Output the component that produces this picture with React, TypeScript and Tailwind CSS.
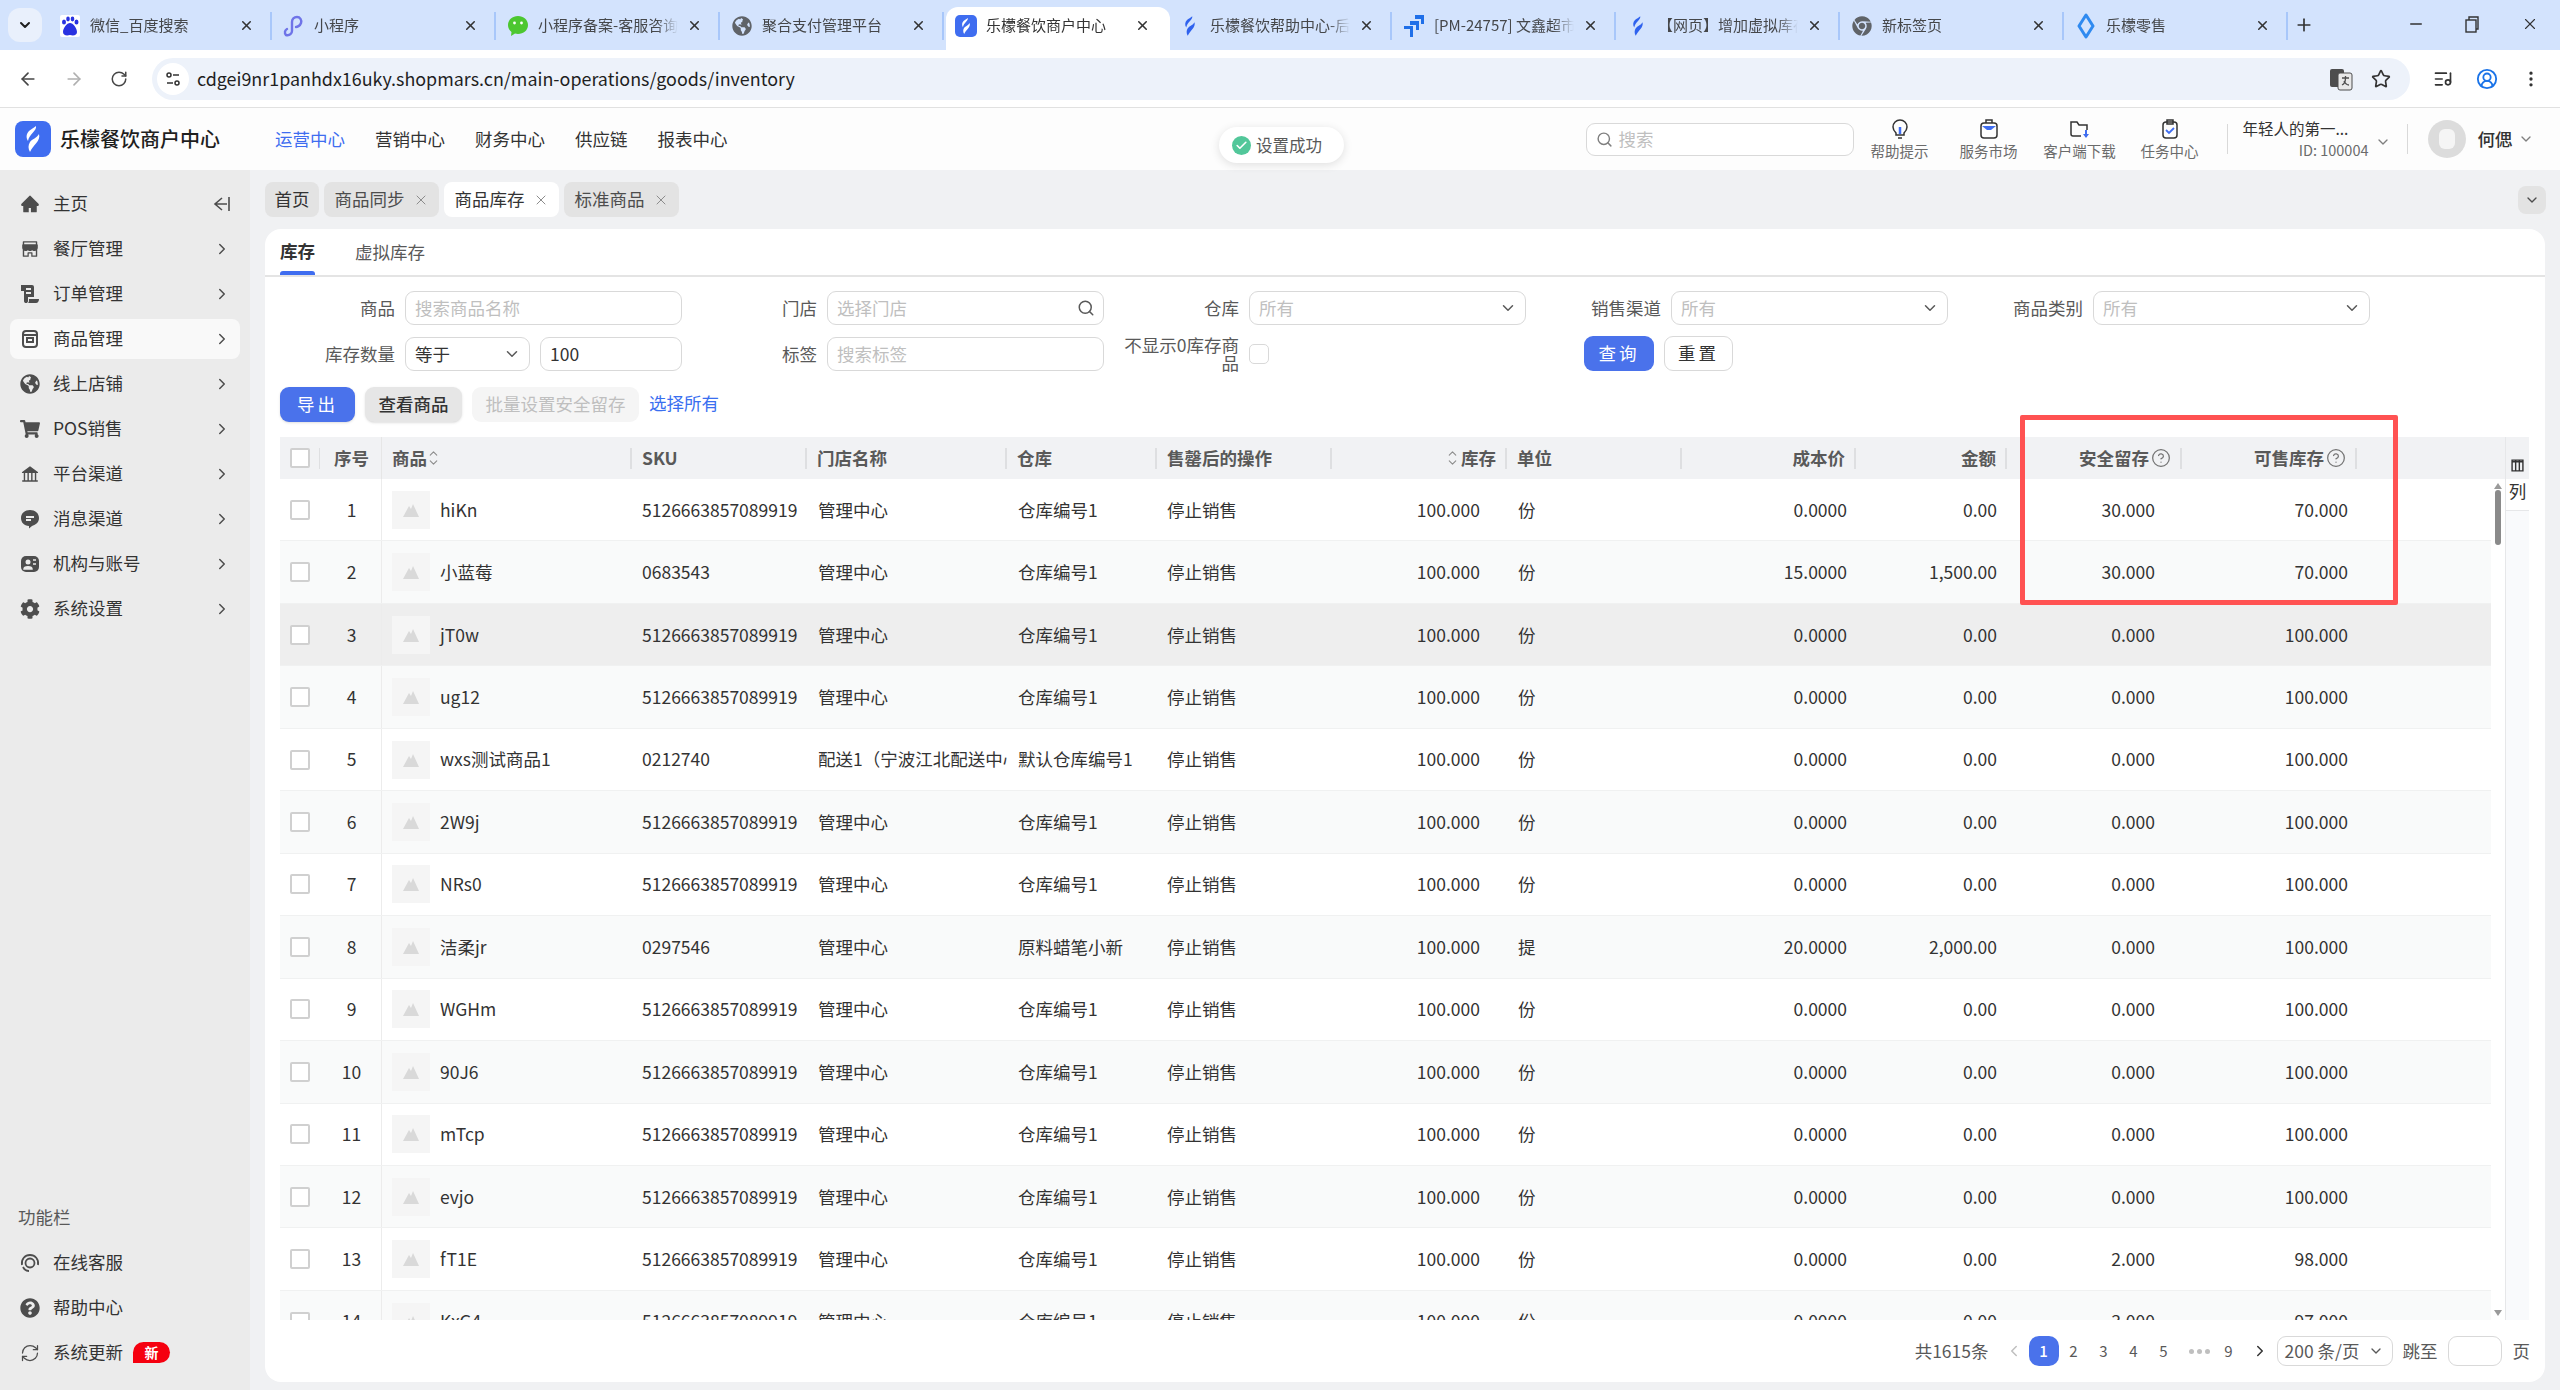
import type { ReactNode } from "react";
import {
  ArrowLeft,
  ArrowRight,
  Check,
  ChevronDown,
  ChevronLeft,
  ChevronRight,
  ChevronUp,
  CircleHelp,
  CircleUserRound,
  EllipsisVertical,
  ListMusic,
  Minus,
  Plus,
  RefreshCw,
  RotateCw,
  Search,
  Star,
  X,
} from "lucide-react";
import { AiFillBank, AiFillHome, AiFillShop } from "react-icons/ai";
import { FaChrome, FaCog, FaGlobeAmericas, FaQuestionCircle, FaShoppingCart } from "react-icons/fa";

const flame = "M21 5C22 10 14 13 13 20 11 17 11 13 14 10 16 8 19 7 21 5ZM24 13C26 20 18 24 15 31 13 28 13 24 15 21 17 18 22 17 24 13Z";

function Logo({ className }: { className: string }) {
  return (
    <svg viewBox="0 0 36 36" className={className}>
      <rect width="36" height="36" rx="8" fill="#3f6df0" />
      <path d={flame} fill="#fff" />
    </svg>
  );
}

function Flame() {
  return (
    <svg viewBox="8 2 20 32" className="h-[24px] w-[18px]">
      <path d={flame} fill="#2f62ee" />
    </svg>
  );
}

function Baidu() {
  return (
    <svg viewBox="0 0 20 22" className="h-[22px] w-[20px]">
      <rect width="20" height="22" rx="2" fill="#fff" />
      <g fill="#2932e1">
        <ellipse cx="4" cy="7" rx="2" ry="2.6" />
        <ellipse cx="8" cy="4" rx="1.8" ry="2.4" />
        <ellipse cx="12.5" cy="4" rx="1.8" ry="2.4" />
        <ellipse cx="16.5" cy="7" rx="2" ry="2.6" />
        <path d="M10 8c3 0 7 5 7 9 0 3-3 4-7 3-4 1-7 0-7-3 0-4 4-9 7-9Z" />
      </g>
    </svg>
  );
}

function MiniApp() {
  return (
    <svg viewBox="0 0 22 22" className="h-[22px] w-[22px]" fill="none" stroke="#6f74e8" strokeWidth="2.4">
      <path d="M3 20c4 1 6-2 6-4V7c0-3 2-5 5-5s5 3 4 6-4 4-5 4" strokeLinecap="round" />
      <path d="M3 20c-2-2-1-5 1-6" strokeLinecap="round" />
    </svg>
  );
}

function WeChat() {
  return (
    <svg viewBox="0 0 22 22" className="h-[22px] w-[22px]">
      <path d="M11 1c5.500 0 10 3.800 10 9s-4.500 9-10 9c-1 0-2-.1-3-.4L4 21l.5-4C2.300 15.300 1 12.900 1 10c0-5.200 4.500-9 10-9Z" fill="#4cc730" />
      <circle cx="7.500" cy="8" r="1.400" fill="#fff" />
      <circle cx="14.500" cy="8" r="1.400" fill="#fff" />
    </svg>
  );
}

function Jira() {
  return (
    <svg viewBox="0 0 22 24" className="h-[24px] w-[22px]" fill="#1f6fe8">
      <path d="M12 1h9v9h-3V5h-6Z" />
      <path d="M7 7h9v9h-3v-5H7Z" />
      <path d="M1 12h9v11H7v-8H1Z" />
    </svg>
  );
}

function Retail() {
  return (
    <svg viewBox="0 0 18 26" className="h-[26px] w-[18px]" fill="none" stroke="#2f8af0" strokeWidth="3">
      <path d="M9 2 16 13 9 24 2 13Z" strokeLinejoin="round" />
    </svg>
  );
}

const browserTabs: { title: string; icon: ReactNode; active?: boolean }[] = [
  { title: "微信_百度搜索", icon: <Baidu /> },
  { title: "小程序", icon: <MiniApp /> },
  { title: "小程序备案-客服咨询", icon: <WeChat /> },
  { title: "聚合支付管理平台", icon: <FaGlobeAmericas className="h-[20px] w-[20px] text-[#5f6368]" /> },
  { title: "乐檬餐饮商户中心", icon: <Logo className="h-[22px] w-[22px]" />, active: true },
  { title: "乐檬餐饮帮助中心-后台", icon: <Flame /> },
  { title: "[PM-24757] 文鑫超市", icon: <Jira /> },
  { title: "【网页】增加虚拟库存", icon: <Flame /> },
  { title: "新标签页", icon: <FaChrome className="h-[20px] w-[20px] text-[#5f6368]" /> },
  { title: "乐檬零售", icon: <Retail /> },
];

function OrderIcon() {
  return (
    <svg viewBox="0 0 20 20" className="h-[20px] w-[20px]" fill="#4d4d4d">
      <path d="M1 1h11a2 2 0 0 1 2 2v10H8v4c0 1.500-1 2-2 2s-2-.5-2-2V7H1Zm5 3v2h5V4Zm0 4v2h5V8Z" fillRule="evenodd" />
      <path d="M9 15h10c0 2-1 4-3 4H8c1-1 1-2 1-4Z" />
    </svg>
  );
}

function GoodsIcon() {
  return (
    <svg viewBox="0 0 20 20" className="h-[20px] w-[20px]" fill="none" stroke="#4d4d4d" strokeWidth="2">
      <rect x="3" y="2" width="14" height="16" rx="3" />
      <path d="M3 6h14" />
      <rect x="7" y="9" width="6" height="4" />
    </svg>
  );
}

function MessageIcon() {
  return (
    <svg viewBox="0 0 20 20" className="h-[20px] w-[20px]">
      <path d="M10 1c5 0 9 3 9 8s-4 7-7 8l-3 2.500V17C4 16.500 1 13.500 1 9c0-5 4-8 9-8Z" fill="#4d4d4d" />
      <path d="M6 8h8M6 11h5" stroke="#ebebeb" strokeWidth="1.800" />
    </svg>
  );
}

function ContactIcon() {
  return (
    <svg viewBox="0 0 20 20" className="h-[20px] w-[20px]">
      <rect x="1" y="2" width="18" height="16" rx="5" fill="#4d4d4d" />
      <circle cx="8" cy="8" r="2.500" fill="#ebebeb" />
      <path d="M4 15c0-3 8-3 8 0ZM13 6h3M13 10h3" fill="#ebebeb" stroke="#ebebeb" strokeWidth="1.500" />
    </svg>
  );
}

function ServiceIcon() {
  return (
    <svg viewBox="0 0 20 20" className="h-[20px] w-[20px]" fill="none" stroke="#4d4d4d" strokeWidth="1.800">
      <circle cx="10" cy="10" r="4.500" />
      <path d="M2 12C1 6 5 2 10 2s9 4 8 10M3 14c1 2 3 4 6 4" />
    </svg>
  );
}

function TranslateIcon() {
  return (
    <svg viewBox="0 0 24 24" className="h-[24px] w-[24px]">
      <rect x="1" y="2" width="14" height="18" rx="2" fill="#4d4d4d" />
      <rect x="9" y="6" width="14" height="17" rx="2" fill="#e8e8e8" stroke="#4d4d4d" />
      <path d="M4 8h7v6H5M13 11h7M16.500 11c0 4-2 6-3.500 7M15 14c1 2 3 4 5 4" fill="none" stroke="#fff" strokeWidth="0" />
      <path d="M13 11h7M16.500 9v2c0 3-1.500 6-3.500 7M15 14c1 2 3 4 5 4" fill="none" stroke="#4d4d4d" strokeWidth="1.300" />
    </svg>
  );
}

const sideItem = "h-[20px] w-[20px] text-[#4d4d4d]";
const menu: { label: string; icon: ReactNode; active?: boolean }[] = [
  { label: "餐厅管理", icon: <AiFillShop className={sideItem} /> },
  { label: "订单管理", icon: <OrderIcon /> },
  { label: "商品管理", icon: <GoodsIcon />, active: true },
  { label: "线上店铺", icon: <FaGlobeAmericas className={sideItem} /> },
  { label: "POS销售", icon: <FaShoppingCart className={sideItem} /> },
  { label: "平台渠道", icon: <AiFillBank className={sideItem} /> },
  { label: "消息渠道", icon: <MessageIcon /> },
  { label: "机构与账号", icon: <ContactIcon /> },
  { label: "系统设置", icon: <FaCog className={sideItem} /> },
];

const sku = "5126663857089919";
const rows = [
  { name: "hiKn", code: sku, store: "管理中心", depot: "仓库编号1", unit: "份", cost: "0.0000", amount: "0.00", safe: "30.000", sale: "70.000" },
  { name: "小蓝莓", code: "0683543", store: "管理中心", depot: "仓库编号1", unit: "份", cost: "15.0000", amount: "1,500.00", safe: "30.000", sale: "70.000" },
  { name: "jT0w", code: sku, store: "管理中心", depot: "仓库编号1", unit: "份", cost: "0.0000", amount: "0.00", safe: "0.000", sale: "100.000" },
  { name: "ug12", code: sku, store: "管理中心", depot: "仓库编号1", unit: "份", cost: "0.0000", amount: "0.00", safe: "0.000", sale: "100.000" },
  { name: "wxs测试商品1", code: "0212740", store: "配送1（宁波江北配送中心）", depot: "默认仓库编号1", unit: "份", cost: "0.0000", amount: "0.00", safe: "0.000", sale: "100.000" },
  { name: "2W9j", code: sku, store: "管理中心", depot: "仓库编号1", unit: "份", cost: "0.0000", amount: "0.00", safe: "0.000", sale: "100.000" },
  { name: "NRs0", code: sku, store: "管理中心", depot: "仓库编号1", unit: "份", cost: "0.0000", amount: "0.00", safe: "0.000", sale: "100.000" },
  { name: "洁柔jr", code: "0297546", store: "管理中心", depot: "原料蜡笔小新", unit: "提", cost: "20.0000", amount: "2,000.00", safe: "0.000", sale: "100.000" },
  { name: "WGHm", code: sku, store: "管理中心", depot: "仓库编号1", unit: "份", cost: "0.0000", amount: "0.00", safe: "0.000", sale: "100.000" },
  { name: "90J6", code: sku, store: "管理中心", depot: "仓库编号1", unit: "份", cost: "0.0000", amount: "0.00", safe: "0.000", sale: "100.000" },
  { name: "mTcp", code: sku, store: "管理中心", depot: "仓库编号1", unit: "份", cost: "0.0000", amount: "0.00", safe: "0.000", sale: "100.000" },
  { name: "evjo", code: sku, store: "管理中心", depot: "仓库编号1", unit: "份", cost: "0.0000", amount: "0.00", safe: "0.000", sale: "100.000" },
  { name: "fT1E", code: sku, store: "管理中心", depot: "仓库编号1", unit: "份", cost: "0.0000", amount: "0.00", safe: "2.000", sale: "98.000" },
  { name: "KxG4", code: sku, store: "管理中心", depot: "仓库编号1", unit: "份", cost: "0.0000", amount: "0.00", safe: "3.000", sale: "97.000" },
];

const gridCols =
  "grid grid-cols-[42px_60px_250px_175px_200px_150px_175px_175px_175px_174px_151px_175px_175px_134px]";

function Box() {
  return <div className="h-[20px] w-[20px] rounded-[2px] border-2 border-[#d0d0d0] bg-white" />;
}

function Sep() {
  return <div className="h-[21px] w-[2px] shrink-0 bg-[#dedfe1]" />;
}

function Sort() {
  return (
    <div className="flex flex-col text-[#8c8c8c]">
      <ChevronUp className="-mb-[4px] h-[13px] w-[13px]" />
      <ChevronDown className="h-[13px] w-[13px]" />
    </div>
  );
}

function HeadLeft({ children }: { children: ReactNode }) {
  return (
    <div className="flex items-center pl-[10px]">
      {children}
      <div className="ml-auto">
        <Sep />
      </div>
    </div>
  );
}

function HeadRight({ children }: { children: ReactNode }) {
  return (
    <div className="flex items-center justify-end gap-[9px]">
      <div className="flex items-center gap-[2px]">{children}</div>
      <Sep />
    </div>
  );
}

function Thumb() {
  return (
    <div className="flex h-[38px] w-[38px] shrink-0 items-center justify-center bg-[#f5f5f5]">
      <svg viewBox="0 0 16 14" className="h-[14px] w-[16px]" fill="#d9d9d9">
        <path d="M0 14 6 3l2 3 2-5 6 13Z" />
      </svg>
    </div>
  );
}

function Field({ label, children }: { label: ReactNode; children: ReactNode }) {
  return (
    <div className="flex items-center gap-[10px]">
      <div className="w-[115px] shrink-0 text-right leading-[18px] text-[#595959]">{label}</div>
      {children}
    </div>
  );
}

function Input({ text, dark, wide, icon }: { text: string; dark?: boolean; wide?: string; icon?: ReactNode }) {
  return (
    <div
      className={`flex h-[34px] items-center justify-between rounded-[9px] border border-[#d9d9d9] bg-white pl-[9px] pr-[8px] ${wide ?? "w-[277px]"} ${dark ? "text-[#333333]" : "text-[#bfbfbf]"}`}
    >
      <span>{text}</span>
      {icon}
    </div>
  );
}

const chev = <ChevronDown className="h-[18px] w-[18px] text-[#595959]" />;

export default function App() {
  return (
    <div className="relative flex h-[1390px] w-[2560px] flex-col overflow-hidden bg-[#f0f1f3] font-['Noto_Sans_CJK_SC','Noto_Sans',sans-serif] text-[17.5px] text-[#333333]">
      {/* browser tabs */}
      <div className="flex h-[50px] shrink-0 bg-[#d3e3fd] pl-[8px]">
        <div className="mt-[8px] flex h-[34px] w-[34px] items-center justify-center rounded-[12px] bg-[#e9f0fc]">
          <ChevronDown className="h-[16px] w-[16px] text-[#1f1f1f]" strokeWidth={3} />
        </div>
        <div className="ml-[8px] flex">
          {browserTabs.map((t) => (
            <div
              key={t.title}
              className={`mt-[7px] flex h-[43px] w-[224px] shrink-0 items-center pb-[6px] pl-[8px] text-[15px] ${t.active ? "rounded-t-[12px] bg-white text-[#333333]" : "text-[#45474a]"}`}
            >
              <div className="flex w-[24px] shrink-0 justify-center">{t.icon}</div>
              <div className="ml-[8px] w-[140px] shrink-0 overflow-hidden whitespace-nowrap [mask-image:linear-gradient(to_right,black_85%,transparent)]">
                {t.title}
              </div>
              <X className="ml-[9px] h-[15px] w-[15px] shrink-0 text-[#333333]" strokeWidth={2.5} />
              {!t.active && <div className="ml-[16px] h-[28px] w-[2px] shrink-0 bg-[#a8c7fa]" />}
            </div>
          ))}
        </div>
        <Plus className="ml-[4px] mt-[15px] h-[20px] w-[20px] text-[#333333]" />
        <div className="ml-auto flex pr-[21px] pt-[15px]">
          <Minus className="h-[18px] w-[18px] text-[#333333]" />
          <svg viewBox="0 0 18 18" className="ml-[38px] h-[18px] w-[18px]" fill="none" stroke="#333333" strokeWidth="1.400">
            <rect x="3" y="5" width="10" height="12" />
            <path d="M6 5V2h9v12h-2" />
          </svg>
          <X className="ml-[40px] h-[18px] w-[18px] text-[#333333]" strokeWidth={1.500} />
        </div>
      </div>

      {/* address bar */}
      <div className="flex h-[58px] shrink-0 items-center border-b border-[#e1e1e1] bg-white">
        <ArrowLeft className="ml-[18px] h-[20px] w-[20px] text-[#474747]" />
        <ArrowRight className="ml-[26px] h-[20px] w-[20px] text-[#b0b0b0]" />
        <RotateCw className="ml-[26px] h-[18px] w-[18px] text-[#474747]" />
        <div className="ml-[24px] flex h-[42px] w-[2258px] items-center rounded-full bg-[#edf2fa]">
          <div className="ml-[5px] flex h-[32px] w-[32px] items-center justify-center rounded-full bg-white">
            <svg viewBox="0 0 16 16" className="h-[16px] w-[16px]" fill="none" stroke="#333333" strokeWidth="1.500">
              <circle cx="4" cy="4" r="2" />
              <path d="M8 4h6M2 12h6" />
              <circle cx="12" cy="12" r="2" />
            </svg>
          </div>
          <span className="ml-[8px] text-[17.900px] text-[#1f1f1f]">cdgei9nr1panhdx16uky.shopmars.cn/main-operations/goods/inventory</span>
          <div className="ml-auto">
            <TranslateIcon />
          </div>
          <Star className="ml-[18px] mr-[19px] h-[20px] w-[20px] text-[#333333]" />
        </div>
        <ListMusic className="ml-[23px] h-[20px] w-[20px] text-[#333333]" />
        <CircleUserRound className="ml-[23px] h-[22px] w-[22px] text-[#1a73e8]" />
        <EllipsisVertical className="ml-[23px] h-[20px] w-[20px] text-[#333333]" />
      </div>

      {/* app header */}
      <div className="flex h-[62px] shrink-0 items-center bg-[#fdfdfd]">
        <Logo className="ml-[15px] h-[36px] w-[36px]" />
        <div className="ml-[9px] w-[160px] text-[20px] font-medium text-[#1f1f1f]">乐檬餐饮商户中心</div>
        <div className="ml-[55px] text-[#3f6df0]">运营中心</div>
        <div className="ml-[30px]">营销中心</div>
        <div className="ml-[30px]">财务中心</div>
        <div className="ml-[30px]">供应链</div>
        <div className="ml-[30px]">报表中心</div>

        <div className="ml-[858px] flex h-[33px] w-[268px] items-center gap-[6px] rounded-[9px] border border-[#d9d9d9] bg-white pl-[9px] text-[#bfbfbf]">
          <Search className="h-[17px] w-[17px] text-[#7f7f7f]" />
          搜索
        </div>
        <div className="flex w-[373px] pl-[10px] text-[14.500px] leading-[18px] text-[#6b6b6b]">
          <div className="flex w-[72px] flex-col items-center gap-[3px]">
            <svg viewBox="0 0 18 20" className="h-[20px] w-[18px]" fill="none" stroke="#333333" strokeWidth="1.500">
              <path d="M5 14c-1-1-3-3-3-6a7 7 0 0 1 14 0c0 3-2 5-3 6v2H5Z" />
              <path d="M7 19h4" />
              <path d="M9 8v7" stroke="#3f6df0" strokeWidth="2.500" />
            </svg>
            帮助提示
          </div>
          <div className="ml-[17px] flex w-[72px] flex-col items-center gap-[3px]">
            <svg viewBox="0 0 20 20" className="h-[20px] w-[20px]" fill="none" stroke="#333333" strokeWidth="1.500">
              <rect x="2" y="4" width="16" height="15" rx="3" />
              <path d="M7 4V1h6v3" />
              <path d="M3 7h14l-5 4H8Z" fill="#3f6df0" stroke="none" />
            </svg>
            服务市场
          </div>
          <div className="ml-[10px] flex w-[90px] flex-col items-center gap-[3px]">
            <svg viewBox="0 0 22 20" className="h-[20px] w-[22px]" fill="none" stroke="#333333" strokeWidth="1.500">
              <path d="M12 17H4a2 2 0 0 1-2-2V3h6l2 3h8v5" />
              <path d="M17 11v7" stroke="#3f6df0" strokeWidth="2" />
              <path d="M14 15l3 4 3-4Z" fill="#3f6df0" stroke="none" />
            </svg>
            客户端下载
          </div>
          <div className="ml-[9px] flex w-[72px] flex-col items-center gap-[3px]">
            <svg viewBox="0 0 18 20" className="h-[20px] w-[18px]" fill="none" stroke="#333333" strokeWidth="1.500">
              <rect x="2" y="3" width="14" height="16" rx="3" />
              <path d="M6 1h6v4H6Z" />
              <path d="M5 11l3 3 5-5" stroke="#3f6df0" strokeWidth="1.800" />
            </svg>
            任务中心
          </div>
        </div>
        <div className="flex h-[30px] items-center border-l border-[#d9d9d9] pl-[15px]">
          <div className="flex w-[126px] flex-col text-[15.500px] leading-[22px]">
            <div className="text-[#333333]">年轻人的第一...</div>
            <div className="text-right text-[14.500px] text-[#6b6b6b]">ID: 100004</div>
          </div>
          <ChevronDown className="ml-[6px] mt-[6px] h-[16px] w-[16px] text-[#7f7f7f]" />
        </div>
        <div className="ml-[16px] flex h-[30px] items-center border-l border-[#d9d9d9] pl-[20px]">
          <div className="flex h-[38px] w-[38px] items-center justify-center rounded-full bg-[#dcdcdc]">
            <div className="h-[20px] w-[16px] rounded-[6px] bg-[#f5f5f5]" />
          </div>
          <div className="ml-[12px] font-medium">何偲</div>
          <ChevronDown className="ml-[5px] h-[16px] w-[16px] text-[#7f7f7f]" />
        </div>
      </div>

      <div className="flex min-h-0 flex-1">
        {/* sidebar */}
        <div className="flex w-[250px] shrink-0 flex-col bg-[#ebebeb] px-[10px] pb-[15px] pt-[11px]">
          <div className="flex h-[45px] items-center pl-[10px] pr-[9px]">
            <AiFillHome className={sideItem} />
            <div className="ml-[13px]">主页</div>
            <svg viewBox="0 0 18 18" className="ml-auto h-[18px] w-[18px]" fill="none" stroke="#4d4d4d" strokeWidth="1.600">
              <path d="M9 3 2 9l7 6M2 9h12M16 2v14" />
            </svg>
          </div>
          {menu.map((m) => (
            <div key={m.label} className="flex h-[45px] items-center">
              <div className={`flex h-[40px] w-full items-center rounded-[8px] pl-[10px] pr-[9px] ${m.active ? "bg-[#f9f9f9]" : ""}`}>
                {m.icon}
                <div className="ml-[13px]">{m.label}</div>
                <ChevronRight className="ml-auto h-[18px] w-[18px] text-[#4d4d4d]" />
              </div>
            </div>
          ))}
          <div className="mt-auto pl-[8px] text-[#595959]">功能栏</div>
          <div className="mt-[10px] flex h-[45px] items-center pl-[10px]">
            <ServiceIcon />
            <div className="ml-[13px]">在线客服</div>
          </div>
          <div className="flex h-[45px] items-center pl-[10px]">
            <FaQuestionCircle className={sideItem} />
            <div className="ml-[13px]">帮助中心</div>
          </div>
          <div className="flex h-[45px] items-center pl-[10px]">
            <RefreshCw className={sideItem} strokeWidth={1.500} />
            <div className="ml-[13px]">系统更新</div>
            <div className="ml-[10px] flex h-[21px] w-[37px] items-center justify-center rounded-r-full rounded-tl-full bg-[#f5000f] text-[14px] font-bold text-white">
              新
            </div>
          </div>
        </div>

        {/* main */}
        <div className="flex min-w-0 flex-1 flex-col pl-[15px] pr-[15px]">
          <div className="mt-[12px] flex h-[35px] shrink-0 gap-[5px]">
            <div className="flex w-[54px] items-center justify-center rounded-[8px] bg-[#e3e3e3]">首页</div>
            {["商品同步", "商品库存", "标准商品"].map((t, i) => (
              <div
                key={t}
                className={`flex w-[115px] items-center justify-center gap-[8px] rounded-[8px] ${i === 1 ? "bg-white" : "bg-[#e3e3e3] text-[#4d4d4d]"}`}
              >
                {t}
                <X className="h-[16px] w-[16px] text-[#8c8c8c]" strokeWidth={1.500} />
              </div>
            ))}
            <div className="ml-auto mr-[-1px] flex h-[28px] w-[28px] items-center justify-center self-center rounded-[8px] bg-[#e3e3e3]">
              <ChevronDown className="h-[16px] w-[16px] text-[#4d4d4d]" />
            </div>
          </div>

          <div className="mb-[8px] mt-[12px] flex min-h-0 flex-1 flex-col rounded-[16px] bg-white">
            <div className="flex h-[48px] shrink-0 border-b-2 border-[#e4e4e4] pl-[15px]">
              <div className="flex w-[35px] flex-col items-center">
                <div className="flex h-[44px] items-center whitespace-nowrap pt-[2px] font-bold text-[#333333]">库存</div>
                <div className="h-[4px] w-full rounded-t-[3px] bg-[#3f6df0]" />
              </div>
              <div className="ml-[40px] flex h-[44px] items-center pt-[2px] text-[#595959]">虚拟库存</div>
            </div>

            <div className="mt-[14px] grid shrink-0 grid-cols-[repeat(5,402px)] gap-x-[20px] gap-y-[11px] pl-[15px]">
              <Field label="商品">
                <Input text="搜索商品名称" />
              </Field>
              <Field label="门店">
                <Input text="选择门店" icon={<Search className="h-[18px] w-[18px] text-[#595959]" />} />
              </Field>
              <Field label="仓库">
                <Input text="所有" icon={chev} />
              </Field>
              <Field label="销售渠道">
                <Input text="所有" icon={chev} />
              </Field>
              <Field label="商品类别">
                <Input text="所有" icon={chev} />
              </Field>
              <Field label="库存数量">
                <div className="flex gap-[10px]">
                  <Input text="等于" dark wide="w-[125px]" icon={chev} />
                  <Input text="100" dark wide="w-[142px]" />
                </div>
              </Field>
              <Field label="标签">
                <Input text="搜索标签" />
              </Field>
              <Field
                label={
                  <>
                    不显示0库存商
                    <br />
                    品
                  </>
                }
              >
                <div className="h-[20px] w-[20px] rounded-[5px] border border-[#d9d9d9] bg-white" />
              </Field>
              <div className="flex gap-[10px] pl-[38px]">
                <button className="h-[35px] w-[70px] rounded-[9px] bg-[#4a72eb] tracking-[3px] text-white">查询</button>
                <button className="h-[35px] w-[69px] rounded-[9px] border border-[#d9d9d9] tracking-[3px] text-[#333333]">重置</button>
              </div>
            </div>

            <div className="mt-[15px] flex shrink-0 items-center gap-[10px] pl-[15px]">
              <button className="h-[35px] w-[75px] rounded-[9px] bg-[#4a72eb] tracking-[3px] text-white shadow-sm">导出</button>
              <button className="h-[35px] w-[97px] rounded-[9px] bg-[#e6e6e6] font-medium text-[#333333] shadow-sm">查看商品</button>
              <button className="h-[35px] w-[167px] rounded-[9px] bg-[#f5f5f5] text-[#bfbfbf]">批量设置安全留存</button>
              <div className="pb-[2px] text-[#3a6ff0]">选择所有</div>
            </div>

            {/* table */}
            <div className="relative ml-[15px] mt-[15px] flex h-[883px] w-[2249px] shrink-0">
              <div className="flex w-[2225px] flex-col">
                <div className="h-[42px] shrink-0 bg-[#f1f2f4]">
                  <div className={`${gridCols} h-full font-bold text-[#595959]`}>
                    <div className="flex items-center justify-between pl-[10px] pr-[2px]">
                      <Box />
                      <div className="h-[21px] w-px bg-[#dedfe1]" />
                    </div>
                    <div className="flex items-center justify-center border-r border-[#e6e6e6]">序号</div>
                    <HeadLeft>
                      <span>商品</span>
                      <Sort />
                    </HeadLeft>
                    <HeadLeft>SKU</HeadLeft>
                    <HeadLeft>门店名称</HeadLeft>
                    <HeadLeft>仓库</HeadLeft>
                    <HeadLeft>售罄后的操作</HeadLeft>
                    <HeadRight>
                      <Sort />
                      <span>库存</span>
                    </HeadRight>
                    <HeadLeft>单位</HeadLeft>
                    <HeadRight>成本价</HeadRight>
                    <HeadRight>金额</HeadRight>
                    <HeadRight>
                      <span>安全留存</span>
                      <CircleHelp className="h-[20px] w-[20px] text-[#737373]" strokeWidth={1.500} />
                    </HeadRight>
                    <HeadRight>
                      <span>可售库存</span>
                      <CircleHelp className="h-[20px] w-[20px] text-[#737373]" strokeWidth={1.500} />
                    </HeadRight>
                    <div />
                  </div>
                </div>
                <div className="flex min-h-0 flex-1">
                  <div className="w-[2211px] overflow-hidden">
                    {rows.map((r, i) => (
                      <div
                        key={i}
                        className={`${gridCols} h-[62.460px] items-center border-b border-[#f0f1f1] ${i === 2 ? "bg-[#eeeeee]" : i % 2 === 1 ? "bg-[#f9fafa]" : "bg-white"}`}
                      >
                        <div className="pl-[10px]">
                          <Box />
                        </div>
                        <div className="flex h-full items-center justify-center border-r border-[#ececec]">{i + 1}</div>
                        <div className="flex items-center gap-[10px] pl-[10px]">
                          <Thumb />
                          {r.name}
                        </div>
                        <div className="pl-[10px]">{r.code}</div>
                        <div className="overflow-hidden whitespace-nowrap pl-[11px]">{r.store}</div>
                        <div className="pl-[11px]">{r.depot}</div>
                        <div className="pl-[10px]">停止销售</div>
                        <div className="pr-[27px] text-right">100.000</div>
                        <div className="pl-[11px]">{r.unit}</div>
                        <div className="pr-[9px] text-right">{r.cost}</div>
                        <div className="pr-[10px] text-right">{r.amount}</div>
                        <div className="pr-[27px] text-right">{r.safe}</div>
                        <div className="pr-[9px] text-right">{r.sale}</div>
                        <div />
                      </div>
                    ))}
                  </div>
                  <div className="flex w-[14px] flex-col items-center bg-white py-[4px]">
                    <div className="h-0 w-0 border-x-[4px] border-b-[6px] border-x-transparent border-b-[#9a9a9a]" />
                    <div className="mt-[1px] h-[55px] w-[6px] rounded-full bg-[#8a8a8a]" />
                    <div className="mt-auto h-0 w-0 border-x-[4px] border-t-[6px] border-x-transparent border-t-[#9a9a9a]" />
                  </div>
                </div>
              </div>
              <div className="flex w-[24px] flex-col border-l border-[#e6e7e9] bg-[#f9fafc]">
                <div className="flex h-[42px] items-end justify-center bg-[#f1f2f4] pb-[7px]">
                  <svg viewBox="0 0 12 12" className="h-[13px] w-[13px]" fill="none" stroke="#333333" strokeWidth="1.300">
                    <path d="M1 1h10v10H1ZM4.300 1v10M7.700 1v10M1 2.500h10" />
                  </svg>
                </div>
                <div className="flex h-[32px] items-start justify-center border-b border-[#e6e7e9] bg-white leading-[24px]">列</div>
              </div>

              {/* red annotation box from the original capture */}
              <div className="pointer-events-none absolute left-[1740px] top-[-22px] h-[190px] w-[378px] rounded-[2px] border-[5px] border-[#ff5252]" />
            </div>

            <div className="flex min-h-0 flex-1 items-center justify-end pr-[15px] text-[#595959]">
              <div className="mr-[10px]">共1615条</div>
              <ChevronLeft className="mx-[6px] h-[18px] w-[18px] text-[#bfbfbf]" />
              <div className="flex h-[30px] w-[30px] items-center justify-center rounded-[10px] bg-[#4a72eb] text-[15px] font-medium text-white">1</div>
              {["2", "3", "4", "5"].map((n) => (
                <div key={n} className="w-[30px] text-center text-[15px]">{n}</div>
              ))}
              <div className="flex w-[35px] justify-center gap-[3px] pl-[6px]">
                <div className="h-[5px] w-[5px] rounded-full bg-[#bfbfbf]" />
                <div className="h-[5px] w-[5px] rounded-full bg-[#bfbfbf]" />
                <div className="h-[5px] w-[5px] rounded-full bg-[#bfbfbf]" />
              </div>
              <div className="w-[30px] text-center text-[15px]">9</div>
              <ChevronRight className="mx-[7px] h-[18px] w-[18px] text-[#333333]" />
              <div className="ml-[1px] flex h-[30px] w-[116px] items-center justify-between rounded-[9px] border border-[#d9d9d9] pl-[7px] pr-[8px]">
                200 条/页
                <ChevronDown className="h-[16px] w-[16px] text-[#595959]" />
              </div>
              <div className="ml-[10px]">跳至</div>
              <div className="ml-[10px] h-[30px] w-[54px] rounded-[9px] border border-[#d9d9d9]" />
              <div className="ml-[11px]">页</div>
            </div>
          </div>
        </div>
      </div>

      {/* toast */}
      <div className="absolute left-[1219px] top-[127px] flex h-[36px] w-[125px] items-center gap-[5px] rounded-full bg-white pl-[13px] text-[16.500px] text-[#595959] shadow-[0_2px_10px_rgba(0,0,0,0.12)]">
        <div className="flex h-[19px] w-[19px] items-center justify-center rounded-full bg-[#52c79a]">
          <Check className="h-[13px] w-[13px] text-white" strokeWidth={3} />
        </div>
        设置成功
      </div>
    </div>
  );
}
